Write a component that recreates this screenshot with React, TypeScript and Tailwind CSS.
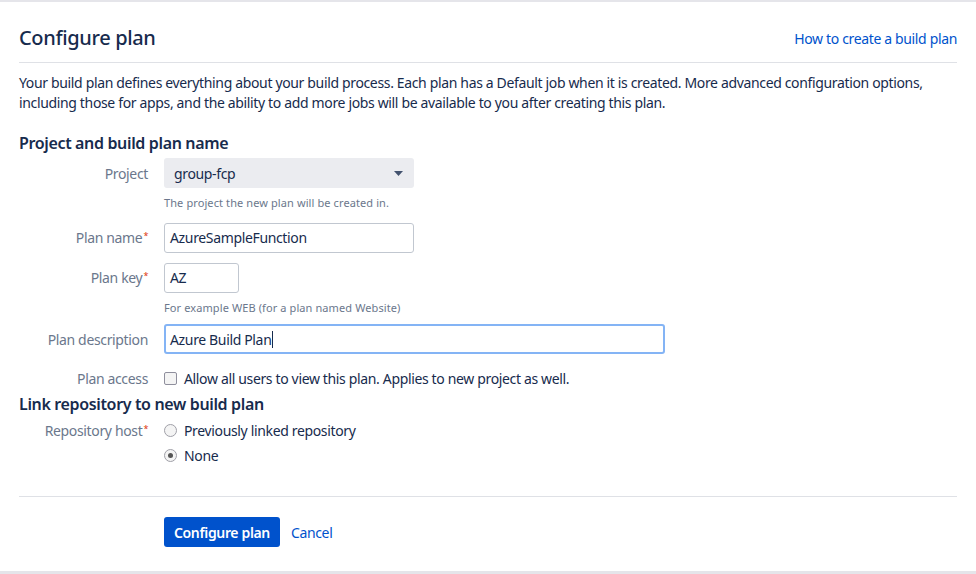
const FONT = "font-['Noto_Sans',sans-serif]";

function Label({ children, required }: { children: string; required?: boolean }) {
  return (
    <div className="w-[129px] shrink-0 text-right text-[14px] text-[#6b778c]">
      {children}
      {required ? <sup className="ml-px text-[9px] text-[#de350b]">*</sup> : null}
    </div>
  );
}

function Help({ children }: { children: string }) {
  return (
    <div className="ml-[145px] mt-[7px] text-[11px] tracking-[0.1px] text-[#6b778c]">{children}</div>
  );
}

export default function App() {
  return (
    <div className={`${FONT} min-h-[574px] bg-white tracking-[-0.35px] text-[#172b4d]`}>
      <div className="h-[2px] bg-[#e5e5ea]" />
      <div className="px-[19px]">
        <div className="flex items-center justify-between border-b border-[#dfe1e6] pb-[12px] pt-[24px]">
          <h1 className="text-[20px] font-medium leading-[24px] text-[#172b4d]">Configure plan</h1>
          <a className="text-[14px] text-[#0052cc]">How to create a build plan</a>
        </div>

        <p className="mt-[10px] text-[14px] leading-[20px] text-[#172b4d]">
          Your build plan defines everything about your build process. Each plan has a Default job when it is
          created. More advanced configuration options, including those for apps, and the ability to add more jobs
          will be available to you after creating this plan.
        </p>

        <h2 className="mt-[20px] text-[16px] font-semibold leading-[20px]">Project and build plan name</h2>

        <div className="mt-[5px] flex items-center">
          <Label>Project</Label>
          <div className="ml-[16px] flex h-[30px] w-[250px] items-center justify-between rounded-[3px] bg-[#ebecf0] pl-[10px] pr-[11px] text-[14px]">
            <span>group-fcp</span>
            <svg width="9" height="5" viewBox="0 0 9 5">
              <path d="M0 0h9L4.5 5z" fill="#42526e" />
            </svg>
          </div>
        </div>
        <Help>The project the new plan will be created in.</Help>

        <div className="mt-[11px] flex items-center">
          <Label required>Plan name</Label>
          <div className="ml-[16px] flex h-[30px] w-[250px] items-center rounded-[3px] border border-[#c1c7d0] px-[5px] text-[14px]">
            AzureSampleFunction
          </div>
        </div>

        <div className="mt-[10px] flex items-center">
          <Label required>Plan key</Label>
          <div className="ml-[16px] flex h-[30px] w-[75px] items-center rounded-[3px] border border-[#c1c7d0] px-[5px] text-[14px]">
            AZ
          </div>
        </div>
        <Help>For example WEB (for a plan named Website)</Help>

        <div className="mt-[8px] flex items-center">
          <Label>Plan description</Label>
          <div className="ml-[16px] flex h-[30px] w-[501px] items-center rounded-[3px] border-2 border-[#84b4f5] px-[4px] text-[14px]">
            Azure Build Plan
            <span className="ml-px inline-block h-[17px] w-px bg-[#172b4d]" />
          </div>
        </div>

        <div className="mt-[14px] flex items-center">
          <Label>Plan access</Label>
          <div className="ml-[16px] flex items-center text-[14px]">
            <span className="inline-block h-[13px] w-[13px] rounded-[2px] border border-[#8f8f9d] bg-[#f4f4f4]" />
            <span className="ml-[7px]">Allow all users to view this plan. Applies to new project as well.</span>
          </div>
        </div>

        <h2 className="mt-[5px] text-[16px] font-semibold leading-[20px]">Link repository to new build plan</h2>

        <div className="mt-[6px] flex items-start">
          <Label required>Repository host</Label>
          <div className="ml-[16px] flex flex-col gap-[4px] text-[14px]">
            <div className="flex items-center">
              <span className="inline-block h-[13px] w-[13px] rounded-full border border-[#a0a0a8] bg-[#f4f4f4]" />
              <span className="ml-[7px]">Previously linked repository</span>
            </div>
            <div className="flex items-center">
              <span className="flex h-[13px] w-[13px] items-center justify-center rounded-full border border-[#a0a0a8] bg-[#f4f4f4]">
                <span className="h-[5px] w-[5px] rounded-full bg-[#555]" />
              </span>
              <span className="ml-[7px]">None</span>
            </div>
          </div>
        </div>

        <div className="mt-[30px] border-t border-[#dfe1e6] pt-[20px]">
          <div className="ml-[145px] flex items-center">
            <button className="h-[30px] rounded-[3px] bg-[#0052cc] px-[10px] text-[14px] font-semibold text-white">
              Configure plan
            </button>
            <a className="ml-[11px] text-[14px] text-[#0052cc]">Cancel</a>
          </div>
        </div>
      </div>
      <div className="mt-[24px] h-[3px] bg-[#e5e5ea]" />
    </div>
  );
}
